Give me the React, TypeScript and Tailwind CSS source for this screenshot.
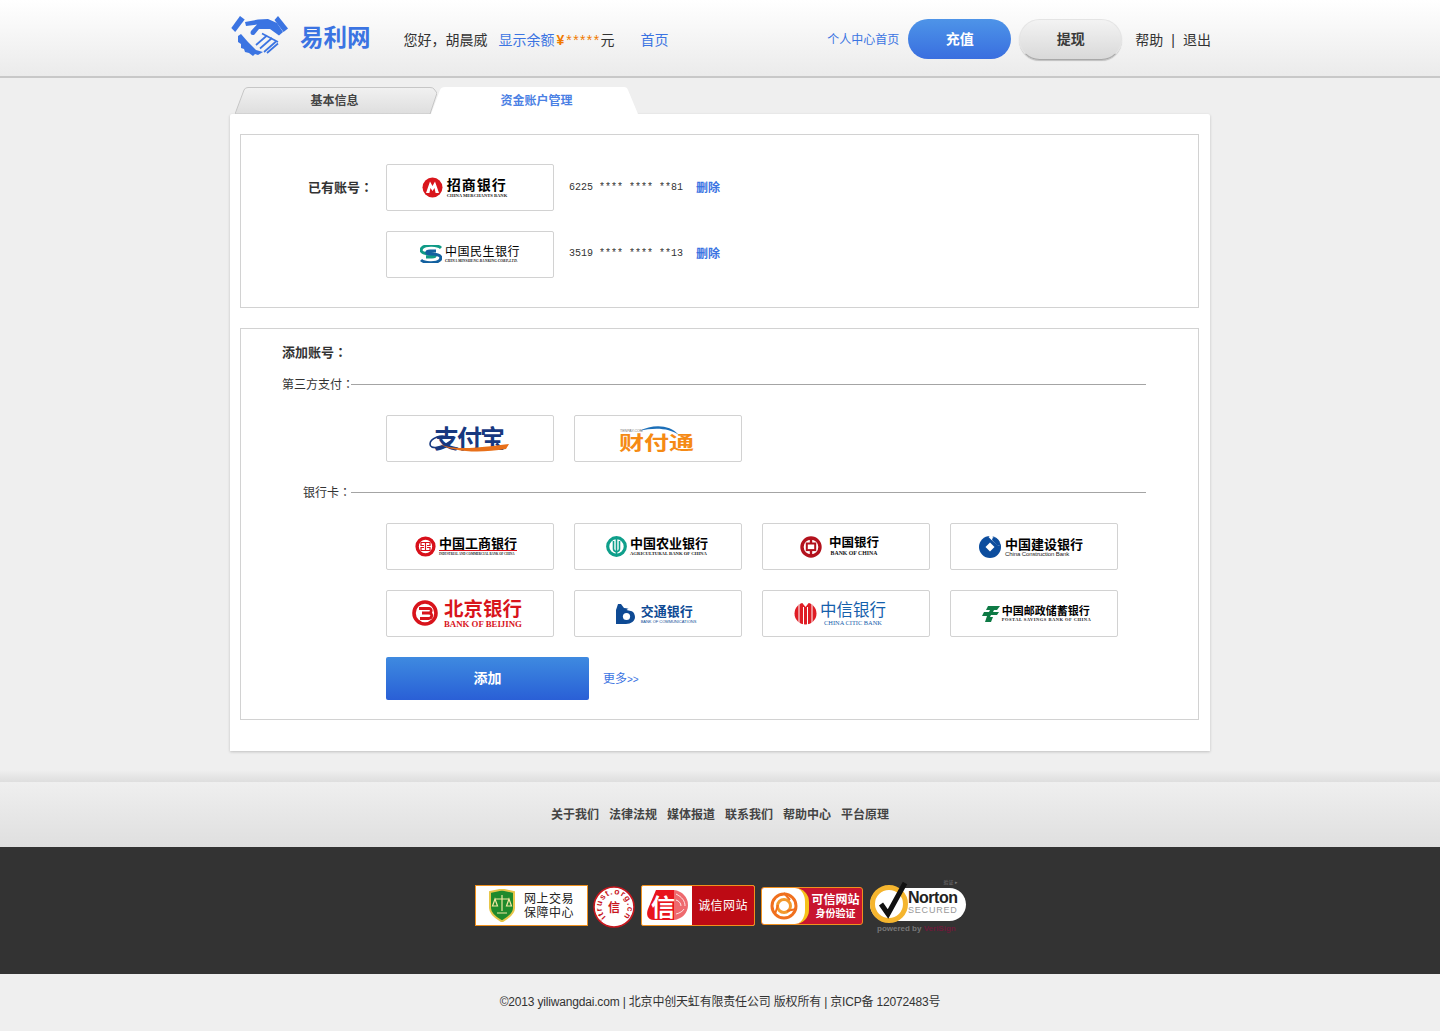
import type { ReactNode } from "react"

const sans = "font-['Liberation_Sans','Noto_Sans_CJK_SC',sans-serif]"

function HandshakeLogo() {
  return (
    <svg width="58" height="44" viewBox="0 0 58 44" className="shrink-0">
      <g fill="#3b74e2">
        <path d="M9 1 L13.7 4.5 L4.2 17 L0.3 13 Z" />
        <path d="M47 1 L57 13.5 L52.5 17 L43.5 5 Z" />
        <path d="M14 7 L27 4.5 L37 4 L46 8 L52 17 L48 20.5 L39 14 L28 14 L23.5 19.5 C21 21 18.5 19 20 16 L26 9.5 L15 11 Z" />
        <path d="M7 21 L10 19 L17 27 L25 35 L32 37 L27 40 L24 39 L22 41 L18 38 L14 37 L13 34 L10 33 L10 29 L7 27 Z" />
      </g>
      <g stroke="#3b74e2" strokeWidth="1.7" fill="none">
        <path d="M25 30 L36 20.5" />
        <path d="M29 33.5 L41 23" />
        <path d="M33 37 L45 26.5" />
        <path d="M31 18.5 L47 27" />
        <path d="M36 38 L47 28.5" />
      </g>
    </svg>
  )
}

function LogoBox({ children }: { children: ReactNode }) {
  return (
    <div className="w-[168px] h-[47px] shrink-0 bg-white border border-[#d2d2d2] rounded-[2px] flex items-center justify-center overflow-hidden">
      {children}
    </div>
  )
}

function Bank({
  mark,
  cn,
  en,
  cnClass,
  enClass,
  gap = "gap-[3px]",
  shift = "",
}: {
  mark: ReactNode
  cn: string
  en: string
  cnClass: string
  enClass: string
  gap?: string
  shift?: string
}) {
  return (
    <div className={`flex items-center ${gap} ${shift}`}>
      {mark}
      <div className="flex flex-col whitespace-nowrap">
        <span className={`leading-none font-['Noto_Sans_CJK_SC',sans-serif] ${cnClass}`}>{cn}</span>
        <span className={`leading-none ${enClass}`}>{en}</span>
      </div>
    </div>
  )
}

const CmbMark = (
  <svg width="21" height="21" viewBox="0 0 21 21">
    <circle cx="10.5" cy="10.5" r="10" fill="#d9161c" />
    <path d="M4 16 L8 4.5 L10.5 9 L13 4.5 L17 16 H13.6 L12.5 11 L10.5 14 L8.5 11 L7.4 16 Z" fill="#fff" />
  </svg>
)
const CmbcMark = (
  <svg width="22" height="18" viewBox="0 0 22 18">
    <path d="M21 3 C18 0 6 -1 2 3 C-1 7 4 9 11 9 C17 9 16 12 12 12 H6" fill="none" stroke="#0f9a86" strokeWidth="3" />
    <path d="M1 15 C4 18 16 19 20 15 C23 11 18 9 11 9 C5 9 6 6 10 6 H16" fill="none" stroke="#12609f" strokeWidth="3" />
  </svg>
)
const IcbcMark = (
  <svg width="21" height="21" viewBox="0 0 21 21">
    <circle cx="10.5" cy="10.5" r="8.4" fill="none" stroke="#d8101a" strokeWidth="3.4" />
    <path d="M5.5 6.5 H15.5 M10.5 6.5 V14.5 M5.5 14.5 H15.5 M6 6.5 V9.5 H9 M15 6.5 V9.5 H12 M6 14.5 V11.5 H9 M15 14.5 V11.5 H12" fill="none" stroke="#d8101a" strokeWidth="1.2" />
  </svg>
)
const AbcMark = (
  <svg width="21" height="21" viewBox="0 0 21 21">
    <circle cx="10.5" cy="10.5" r="8.8" fill="none" stroke="#0f9f8b" strokeWidth="3.2" />
    <path d="M10.5 2 V19 M7.5 5 V13 C7.5 15 9 15.5 10.5 16 C12 15.5 13.5 15 13.5 13 V5" fill="none" stroke="#0f9f8b" strokeWidth="1.6" />
  </svg>
)
const BocMark = (
  <svg width="22" height="22" viewBox="0 0 22 22">
    <circle cx="11" cy="11" r="9" fill="none" stroke="#b3121d" strokeWidth="3.4" />
    <rect x="6.8" y="7.5" width="8.4" height="6.6" fill="none" stroke="#b3121d" strokeWidth="2" />
    <path d="M11 2 V7.5 M11 14 V20" stroke="#b3121d" strokeWidth="2.4" />
  </svg>
)
const CcbMark = (
  <svg width="22" height="22" viewBox="0 0 22 22">
    <circle cx="11" cy="11" r="11" fill="#0c4d9e" />
    <path d="M11 6.5 L15.5 11 L11 15.5 L6.5 11 Z" fill="#fff" />
    <path d="M12 -1 L23 8 L19 10 L12 3.5 L9.5 1 Z" fill="#fff" />
    <path d="M14 1 A11 11 0 0 1 21.8 9 L18.5 10 L13 4 Z" fill="#0c4d9e" />
  </svg>
)
const BobMark = (
  <svg width="26" height="26" viewBox="0 0 26 26">
    <circle cx="13" cy="13" r="11" fill="none" stroke="#d8141c" strokeWidth="3.6" />
    <path d="M7 8.5 H17 C20 8.5 20 13 16.5 13 H10 M16.5 13 C21 13 20.5 18.5 16.5 18.5 H8" fill="none" stroke="#d8141c" strokeWidth="2.8" />
  </svg>
)
const BocomMark = (
  <svg width="20" height="20" viewBox="0 0 20 20">
    <path d="M2 0 H5 L8 4 C14 4 19 8 19 13 C19 17 15 20 10 20 H0 V6 Z" fill="#0e4a94" />
    <circle cx="10.5" cy="12.5" r="3.6" fill="#fff" />
    <path d="M10.5 6 L19 0 L19 8 Z" fill="#fff" />
  </svg>
)
const CiticMark = (
  <svg width="23" height="23" viewBox="0 0 23 23">
    <circle cx="11.5" cy="11.5" r="11" fill="#df1d25" />
    <path d="M5 0 V23 M9.5 5 V23 M13.5 5 V23 M18 0 V23" stroke="#fff" strokeWidth="1" />
    <path d="M7.5 0 L11.5 5 L15.5 0 Z" fill="#fff" />
  </svg>
)
const PsbcMark = (
  <svg width="18" height="16" viewBox="0 0 18 16">
    <path d="M6 0 H18 L15 4 H12 L11 6 H17 L15 9 H9 L8 11 H11 L9 16 H3 L5 10 H0 L2 6 H7 L8 4 H4 Z" fill="#0e7a45" />
  </svg>
)

const banks = [
  { mark: IcbcMark, cn: "中国工商银行", en: "INDUSTRIAL AND COMMERCIAL BANK OF CHINA", cnClass: "font-bold text-[13px] text-black", enClass: "font-['Liberation_Serif',serif] font-bold text-[3.1px] text-[#222] border-t border-[#d8101a] mt-[1px] pt-[2px]", shift: "mr-[8px]" },
  { mark: AbcMark, cn: "中国农业银行", en: "AGRICULTURAL BANK OF CHINA", cnClass: "font-bold text-[13px] text-black", enClass: "font-['Liberation_Serif',serif] font-bold text-[4.7px] text-[#222] mt-[3px]", gap: "gap-[3px]", shift: "mr-[2px]" },
  { mark: BocMark, cn: "中国银行", en: "BANK OF CHINA", cnClass: "font-bold text-[12.5px] text-black", enClass: "font-['Liberation_Serif',serif] font-bold text-[5.8px] text-[#111] mt-[3px] text-center", gap: "gap-[7px]", shift: "mr-[13px]" },
  { mark: CcbMark, cn: "中国建设银行", en: "China Construction Bank", cnClass: "font-bold text-[13px] text-black", enClass: "font-['Liberation_Sans',sans-serif] text-[6px] tracking-[-0.1px] text-[#222] mt-[1px]", gap: "gap-[4px]", shift: "mr-[6px]" },
  { mark: BobMark, cn: "北京银行", en: "BANK OF BEIJING", cnClass: "font-bold text-[19.5px] text-[#d8141c]", enClass: "font-['Liberation_Serif',serif] font-bold text-[8.8px] text-[#d8141c] mt-[2px]", gap: "gap-[6px]", shift: "mr-[6px]" },
  { mark: BocomMark, cn: "交通银行", en: "BANK OF COMMUNICATIONS", cnClass: "font-bold text-[13px] text-[#0e4a94]", enClass: "font-['Liberation_Sans',sans-serif] text-[4px] text-[#0e4a94] mt-[3px]", gap: "gap-[5px]", shift: "mr-[4px]" },
  { mark: CiticMark, cn: "中信银行", en: "CHINA CITIC BANK", cnClass: "text-[16.5px] text-[#1560ac]", enClass: "font-['Liberation_Serif',serif] text-[6.4px] text-[#1560ac] mt-[2px] text-center", gap: "gap-[3px]", shift: "mr-[12px]" },
  { mark: PsbcMark, cn: "中国邮政储蓄银行", en: "POSTAL SAVINGS BANK OF CHINA", cnClass: "font-bold text-[11px] text-black", enClass: "font-['Liberation_Serif',serif] font-bold text-[4.5px] tracking-[0.5px] text-[#222] mt-[2px]", gap: "gap-[2px]", shift: "ml-[5px]" },
]

// centred full-width colon as in the reference: the TC font sets it mid-cell
function Colon() {
  return <span className="font-['Noto_Sans_CJK_TC',sans-serif]">：</span>
}

function SectionLine({ label, labelClass }: { label: string; labelClass: string }) {
  return (
    <div className="flex items-center h-[16px] w-[864px]">
      <span className={`text-[12px] leading-none text-[#333] whitespace-nowrap ${labelClass}`}>
        {label}
        <Colon />
      </span>
      <div className="flex-1 h-[1px] bg-[#a4a4a4]" />
    </div>
  )
}

function NortonBadge() {
  return (
    <div className="relative w-[97px] h-[55px] shrink-0">
      <span className="absolute right-[9px] top-0 text-[5px] leading-none text-[#777]">验证 ▸</span>
      <div className="absolute left-[0px] top-[8px] w-[96px] h-[33px] rounded-full bg-white" />
      <div className="absolute left-[0px] top-[5px] w-[38px] h-[38px] rounded-full border-[5px] border-[#f5b52e] bg-white" />
      <svg width="40" height="44" viewBox="0 0 40 44" className="absolute left-[1px] top-0">
        <path d="M10 24 L17 34 L34 3" fill="none" stroke="#111" strokeWidth="5" />
      </svg>
      <span className="absolute left-[38px] top-[10px] text-[16px] font-bold leading-none text-[#222] font-['Liberation_Sans',sans-serif] tracking-[-0.5px]">Norton</span>
      <span className="absolute left-[38px] top-[26px] text-[9px] leading-none text-[#999] font-['Liberation_Sans',sans-serif] tracking-[0.8px]">SECURED</span>
      <span className="absolute left-[7px] top-[45px] text-[8px] font-bold leading-none text-[#777] font-['Liberation_Sans',sans-serif] whitespace-nowrap">
        powered by <span className="text-[#6d1a3a]">VeriSign</span>
      </span>
    </div>
  )
}

export default function App() {
  return (
    <div className={`min-h-[1031px] bg-[#efefef] ${sans}`}>
      {/* header */}
      <header className="h-[78px] bg-gradient-to-b from-white to-[#ebebeb] border-b-2 border-[#c8c8c8]">
        <div className="w-[981px] ml-[230px] h-[76px] pt-[2px] flex items-center text-[14px] text-[#333]">
          <div className="ml-[1px] mt-[-5px]">
            <HandshakeLogo />
          </div>
          <span className="ml-[11px] mt-[-4px] text-[23.5px] font-bold leading-none text-[#3b74e2] whitespace-nowrap font-['Noto_Sans_CJK_SC',sans-serif]">易利网</span>
          <span className="ml-[33px] mt-[2px] w-[95px] whitespace-nowrap">您好，胡晨威</span>
          <span className="mt-[2px] text-[#3b74e2] whitespace-nowrap">显示余额</span>
          <span className="ml-[2px] mt-[2px] text-[#f07a00] font-bold whitespace-nowrap">¥</span>
          <span className="ml-[2px] mt-[2px] text-[#f07a00] whitespace-nowrap tracking-[1.4px]">*****</span>
          <span className="mt-[2px]">元</span>
          <a className="ml-[26px] mt-[2px] text-[#3b74e2] whitespace-nowrap">首页</a>
          <a className="ml-auto mt-[2px] text-[12px] text-[#3b74e2] whitespace-nowrap">个人中心首页</a>
          <button className="ml-[9px] w-[103px] h-[40px] pt-[1px] rounded-full bg-gradient-to-b from-[#4e94e8] to-[#3a6edf] text-white font-bold mb-[1px]">充值</button>
          <button className="ml-[8px] w-[103px] h-[41px] rounded-full bg-gradient-to-b from-[#f3f3f3] to-[#d9d9d9] text-[#3a3a3a] font-bold border border-[#e4e4e4] border-b-[#a8a8a8] shadow-[0_1px_1px_rgba(0,0,0,0.2)]">提现</button>
          <a className="ml-[13px] mt-[2px] whitespace-nowrap">帮助</a>
          <span className="mx-[8px] mt-[2px] leading-none">|</span>
          <a className="mt-[2px] whitespace-nowrap">退出</a>
        </div>
      </header>

      {/* tabs */}
      <div className="w-[980px] ml-[230px] mt-[9px] h-[27px] flex relative">
        <div className="relative ml-[5px] w-[202px] h-[27px] flex items-center justify-center">
          <svg width="202" height="27" viewBox="0 0 202 27" className="absolute inset-0">
            <defs>
              <linearGradient id="tab" x1="0" y1="0" x2="0" y2="1">
                <stop offset="0" stopColor="#f1f1f1" />
                <stop offset="1" stopColor="#dedede" />
              </linearGradient>
            </defs>
            <path d="M0 27 L9 3 Q10 0.5 13 0.5 H195 Q198 0.5 199 2 L202 6 L195 27 Z" fill="url(#tab)" stroke="#c6c6c6" />
          </svg>
          <span className="relative text-[12px] font-bold text-[#444] mr-[3px]">基本信息</span>
        </div>
        <div className="relative ml-[-6px] w-[207px] h-[27px] flex items-center justify-center">
          <svg width="207" height="27" viewBox="0 0 207 27" className="absolute inset-0">
            <path d="M0 27 L9 3 Q10 0 14 0 H193 Q196 0 197 3 L207 27 Z" fill="#fff" />
          </svg>
          <span className="relative text-[12px] font-bold text-[#4a80e4] ml-[4px]">资金账户管理</span>
        </div>
      </div>

      {/* card */}
      <main className="w-[980px] h-[637px] ml-[230px] bg-white rounded-t-[2px] shadow-[0_1px_3px_rgba(0,0,0,0.2)] pt-[20px] pl-[10px]">
        <section className="w-[959px] h-[174px] border border-[#d2d2d2] pt-[29px]">
          <div className="flex items-center">
            <span className="w-[132px] text-right text-[13px] leading-[16px] font-bold text-[#333] mt-[-1px] whitespace-nowrap">
              已有账号
              <Colon />
            </span>
            <div className="ml-[13px]">
              <LogoBox>
                <Bank
                  mark={CmbMark}
                  cn="招商银行"
                  en="CHINA MERCHANTS BANK"
                  cnClass="font-bold text-[14px] tracking-[1px] text-black"
                  enClass="font-['Liberation_Serif',serif] font-bold text-[4.6px] text-[#222] mt-[3px]"
                  gap="gap-[4px]"
                  shift="mr-[11px]"
                />
              </LogoBox>
            </div>
            <span className="ml-[15px] w-[127px] font-['Liberation_Mono',monospace] text-[10px] text-[#333] whitespace-nowrap">6225 **** **** **81</span>
            <a className="text-[12px] font-bold text-[#3b74e2]">删除</a>
          </div>
          <div className="flex items-center mt-[20px]">
            <div className="ml-[145px]">
              <LogoBox>
                <Bank
                  mark={CmbcMark}
                  cn="中国民生银行"
                  en="CHINA MINSHENG BANKING CORP.,LTD."
                  cnClass="text-[12px] tracking-[0.5px] text-black"
                  enClass="font-['Liberation_Serif',serif] font-bold text-[3.8px] italic text-[#222] mt-[3px]"
                />
              </LogoBox>
            </div>
            <span className="ml-[15px] mt-[-2px] w-[127px] font-['Liberation_Mono',monospace] text-[10px] text-[#333] whitespace-nowrap">3519 **** **** **13</span>
            <a className="mt-[-2px] text-[12px] font-bold text-[#3b74e2]">删除</a>
          </div>
        </section>

        <section className="w-[959px] h-[392px] mt-[20px] border border-[#d2d2d2] pl-[41px] pt-[16px]">
          <p className="text-[13px] leading-[14px] font-bold text-[#333] whitespace-nowrap">
            添加账号
            <Colon />
          </p>
          <div className="mt-[16px]">
            <SectionLine label="第三方支付" labelClass="w-[69px]" />
          </div>
          <div className="mt-[23px] ml-[104px] flex gap-[20px]">
            <LogoBox>
              <div className="relative w-[82px] h-[30px]">
                <span className="absolute left-[5px] top-[-1px] text-[25px] leading-[28px] font-bold text-[#17387f] font-['Noto_Sans_CJK_SC',sans-serif] tracking-[-2px] whitespace-nowrap">支付宝</span>
                <svg width="82" height="30" viewBox="0 0 82 30" className="absolute inset-0">
                  <path d="M20 14 C12 9 1 15 1 20 C1 26 12 24 22 17" fill="none" stroke="#17387f" strokeWidth="1.6" />
                  <path d="M8 19 C24 27 48 24 80 20 L77 25 C52 29 26 29 8 19 Z" fill="#e8701a" />
                </svg>
              </div>
            </LogoBox>
            <LogoBox>
              <div className="relative w-[78px] h-[34px] flex flex-col justify-end">
                <svg width="78" height="30" viewBox="0 0 78 30" className="absolute inset-0">
                  <path d="M20 9 C34 2 50 2 60 13 C50 6 36 5 20 9 Z" fill="#1c6fb8" />
                </svg>
                <span className="absolute left-[1px] top-[8px] text-[3.6px] leading-none text-[#777] font-['Liberation_Sans',sans-serif] whitespace-nowrap">TENPAY.COM</span>
                <span className="text-[25px] leading-[20px] h-[20px] mb-[4px] font-bold text-[#f58a14] font-['Noto_Sans_CJK_SC',sans-serif] whitespace-nowrap scale-y-[0.75]">财付通</span>
              </div>
            </LogoBox>
          </div>
          <div className="mt-[22px]">
            <SectionLine label="银行卡" labelClass="w-[69px] text-right" />
          </div>
          <div className="mt-[23px] ml-[104px] grid grid-cols-[repeat(4,168px)] gap-[20px]">
            {banks.map((b) => (
              <LogoBox key={b.cn}>
                <Bank {...b} />
              </LogoBox>
            ))}
          </div>
          <div className="mt-[20px] ml-[104px] flex items-center">
            <button className="w-[203px] h-[43px] rounded-[2px] bg-gradient-to-b from-[#3f8ae0] to-[#2a5fd6] text-[14px] font-bold text-white">添加</button>
            <a className="ml-[14px] text-[12px] text-[#3b74e2] whitespace-nowrap">
              更多<span className="text-[10px]">&gt;&gt;</span>
            </a>
          </div>
        </section>
      </main>

      {/* footer */}
      <div className="mt-[19px] h-[12px] bg-gradient-to-b from-[#efefef] to-[#dedede]" />
      <nav className="h-[65px] bg-gradient-to-b from-[#efefef] to-[#dfdfdf] flex items-center justify-center gap-[10px] text-[12px] font-bold text-[#444]">
        <a>关于我们</a>
        <a>法律法规</a>
        <a>媒体报道</a>
        <a>联系我们</a>
        <a>帮助中心</a>
        <a>平台原理</a>
      </nav>
      <div className="h-[127px] bg-[#333333] pt-[38px] pl-[475px] flex items-start">
        {/* 网上交易 */}
        <div className="w-[113px] h-[41px] shrink-0 bg-white border border-[#f0911e] flex items-center pl-[12px] gap-[8px]">
          <svg width="28" height="33" viewBox="0 0 28 33">
            <path d="M2 3 L14 0.5 L26 3 V19 C26 26 18 30 14 32.5 C10 30 2 26 2 19 Z" fill="#1f8a2c" stroke="#e7c64a" strokeWidth="2" />
            <path d="M14 6 V22 M7 10 H21 M7 10 L4.5 17 H9.5 Z M21 10 L18.5 17 H23.5 Z M9 24 H19" fill="none" stroke="#f3e7a0" strokeWidth="1.2" />
          </svg>
          <div className="text-[12px] leading-[14px] text-[#222] whitespace-nowrap tracking-[0.5px]">
            <p>网上交易</p>
            <p>保障中心</p>
          </div>
        </div>
        {/* itrust */}
        <svg width="42" height="42" viewBox="0 0 42 42" className="ml-[5px] mt-[1px] shrink-0">
          <circle cx="21" cy="21" r="20" fill="#fff" stroke="#c8161d" strokeWidth="1.6" />
          <defs>
            <path id="ring" d="M13 31 A13 13 0 1 1 30 31" />
          </defs>
          <text fontSize="8.5" fontWeight="700" fill="#c8161d" fontFamily="Liberation Sans">
            <textPath href="#ring" textLength="62">itrust.org.cn</textPath>
          </text>
          <text x="21" y="26" textAnchor="middle" fontSize="12" fontWeight="700" fill="#c8161d" fontFamily="Noto Sans CJK SC">信</text>
        </svg>
        {/* 诚信网站 */}
        <div className="ml-[6px] w-[114px] h-[41px] shrink-0 bg-white border border-[#f0911e] rounded-[2px] flex overflow-hidden">
          <div className="relative w-[50px] flex items-center">
            <svg width="48" height="33" viewBox="0 0 48 33" className="absolute left-[4px] top-[3px]">
              <path d="M10 1 H28 V31 H8 C1 31 0 25 2 20 Z" fill="#e8141c" />
              <path d="M28 1 C36 2 42 8 42 16 C42 24 36 30 28 31 Z" fill="#ee6a6e" />
              <path d="M30 5 C36 8 39 12 39 17 M30 11 C33 12 35 14 35 17 M30 25 C34 24 37 22 38 20" fill="none" stroke="#fff" strokeWidth="0.8" />
            </svg>
            <span className="relative ml-[9px] text-[24px] leading-none font-bold text-white font-['Noto_Sans_CJK_SC',sans-serif]">信</span>
          </div>
          <div className="flex-1 bg-[#bd0a14] flex items-center justify-center text-[12px] text-white whitespace-nowrap tracking-[0.4px]">诚信网站</div>
        </div>
        {/* 可信网站 */}
        <div className="ml-[6px] mt-[2px] w-[102px] h-[38px] shrink-0 bg-[#c8152f] border border-[#f0911e] rounded-[3px] flex overflow-hidden">
          <div className="w-[47px] bg-white flex items-center justify-center rounded-r-[14px] border-r-[4px] border-[#f6c21a]">
            <svg width="30" height="30" viewBox="0 0 30 30">
              <circle cx="15" cy="15" r="12" fill="none" stroke="#f0701e" strokeWidth="3" />
              <circle cx="15" cy="15" r="6.5" fill="none" stroke="#f29a2e" strokeWidth="3" />
              <path d="M15 2 L21 9 M27 18 L18 20 M6 23 L9 14" stroke="#f0701e" strokeWidth="2" />
            </svg>
          </div>
          <div className="flex-1 flex flex-col items-center justify-center text-white font-bold whitespace-nowrap">
            <span className="text-[12px] leading-[14px]">可信网站</span>
            <span className="text-[10px] leading-[13px]">身份验证</span>
          </div>
        </div>
        <div className="ml-[7px] mt-[-5px]">
          <NortonBadge />
        </div>
      </div>
      <div className="h-[57px] pb-[2px] bg-[#efefef] flex items-center justify-center text-[12px] text-[#333] whitespace-nowrap tracking-[-0.18px]">
        ©2013 yiliwangdai.com | 北京中创天虹有限责任公司 版权所有 | 京ICP备 12072483号
      </div>
    </div>
  )
}
